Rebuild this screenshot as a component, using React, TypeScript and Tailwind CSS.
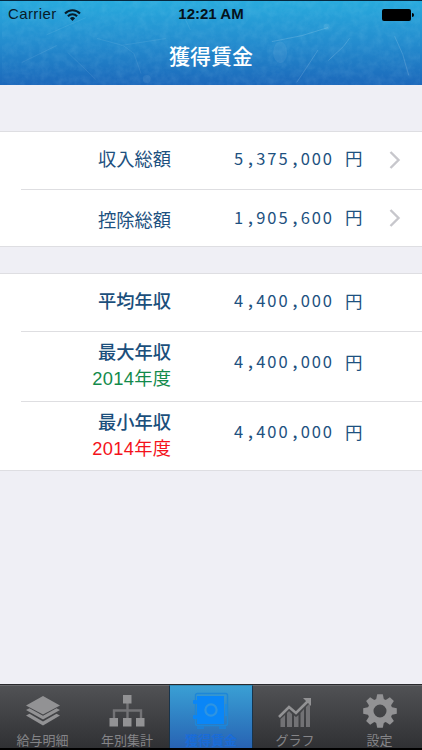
import React, { useState } from 'react';

type TabId = 'slip' | 'yearly' | 'wages' | 'graph' | 'settings';

interface Row {
  id: string;
  label: string;
  amount: string;
  year?: string;
  yearColor?: string;
  link?: boolean;
  bold?: boolean;
  height: string;
  amountShift: string;
  unitShift: string;
  labelShift: string;
}

const TOTALS: Row[] = [
  {
    id: 'income',
    label: '収入総額',
    amount: '5,375,000',
    link: true,
    height: 'h-[57px]',
    amountShift: 'pb-[2px]',
    unitShift: 'pt-0',
    labelShift: 'pb-[1px]',
  },
  {
    id: 'deduction',
    label: '控除総額',
    amount: '1,905,600',
    link: true,
    height: 'h-[56px]',
    amountShift: 'pt-0',
    unitShift: 'pt-0',
    labelShift: 'pt-[5px]',
  },
];

const YEARLY: Row[] = [
  {
    id: 'average',
    label: '平均年収',
    amount: '4,400,000',
    bold: true,
    height: 'h-[57px]',
    amountShift: 'pb-[2px]',
    unitShift: 'pt-[2px]',
    labelShift: 'pb-[1px]',
  },
  {
    id: 'max',
    label: '最大年収',
    amount: '4,400,000',
    year: '2014年度',
    yearColor: 'text-[#138a4b]',
    bold: true,
    height: 'h-[69px]',
    amountShift: 'pb-[8px]',
    unitShift: 'pt-[2px]',
    labelShift: 'pb-[1px]',
  },
  {
    id: 'min',
    label: '最小年収',
    amount: '4,400,000',
    year: '2014年度',
    yearColor: 'text-[#f4121b]',
    bold: true,
    height: 'h-[68px]',
    amountShift: 'pb-[7px]',
    unitShift: 'pt-[2px]',
    labelShift: 'pb-[1px]',
  },
];

const SANS = "font-['Liberation_Sans','Noto_Sans_CJK_JP',sans-serif]";

function Header() {
  return (
    <header className="relative h-[85px] shrink-0 overflow-hidden border-t border-[#06283f] bg-linear-to-b from-[#28aadd] via-[#248cce] to-[#1c68ba]">
      {/* Scratched texture */}
      <svg className="absolute inset-0 h-full w-full" viewBox="0 0 422 85" fill="none" stroke="#fff" strokeLinecap="round">
        <filter id="speckle" x="0" y="0" width="100%" height="100%">
          <feTurbulence type="fractalNoise" baseFrequency="0.13" numOctaves="4" seed="8" />
          <feColorMatrix values="0 0 0 0 0.6  0 0 0 0 0.9  0 0 0 0 1  0.9 0 0 0 -0.3" />
        </filter>
        <rect width="422" height="85" filter="url(#speckle)" stroke="none" opacity="0.18" />
        <g opacity="0.15" strokeWidth="1">
          <path d="M273 41L303 35L329 27" />
          <path d="M319 50L308 67L298 82" />
          <path d="M330 60L345 46L351 38" />
          <path d="M397 36L405 54L411 75" />
        </g>
        <g opacity="0.08" strokeWidth="1">
          <path d="M96 38L122 45L133 53L140 73" />
          <path d="M45 34L84 17M20 62L55 45M66 52L94 79" />
          <path d="M120 45L165 38M182 12L190 29" />
        </g>
        <g fill="#fff" stroke="none" opacity="0.07">
          <ellipse cx="281" cy="52" rx="7" ry="11" />
          <circle cx="146" cy="79" r="4" />
          <circle cx="328" cy="26" r="3" />
        </g>
      </svg>

      <div className="relative grid h-[27px] grid-cols-3 items-center px-2 text-[15px] text-[#081b28]">
        <div className="flex items-center gap-[7px]">
          <span className="tracking-[0.4px]">Carrier</span>
          <svg width="17" height="12" viewBox="0 0 17 12" fill="none" stroke="currentColor" strokeWidth="2">
            <path d="M1 4.5C5.2 0 11.8 0 16 4.5" />
            <path d="M3.9 7.3C6.6 4.4 10.4 4.4 13.1 7.3" />
            <path d="M5.9 9.2C7.4 7.6 9.6 7.6 11.1 9.2L8.5 12Z" fill="currentColor" stroke="none" />
          </svg>
        </div>
        <span className="text-center font-bold whitespace-nowrap text-[#05121b]">12:21 AM</span>
        <div className="flex items-center justify-end">
          <span className="h-3 w-[29px] rounded-[2px] bg-black" />
          <span className="ml-[1px] h-1 w-[2px] rounded-r-full bg-black" />
        </div>
      </div>
      <h1 className="relative mt-[13px] text-center text-[21px] leading-[31px] font-medium text-white">獲得賃金</h1>
    </header>
  );
}

// Commas take the same width as a digit so that the columns line up
function Amount({ value }: { value: string }) {
  return (
    <span className="w-[111px] shrink-0 pb-[2px] font-['Noto_Sans_CJK_JP',sans-serif] text-[16.5px] tracking-[1.95px] whitespace-nowrap">
      {value.split(',').map((part, i) => (
        <React.Fragment key={i}>
          {i > 0 && <span className="inline-block w-[11.1px] pl-[3px] font-medium">,</span>}
          {part}
        </React.Fragment>
      ))}
    </span>
  );
}

function ListRow({ row, last }: { row: Row; last: boolean }) {
  return (
    <li className={`ml-[21px] flex items-stretch text-[#1d5180] ${row.height} ${last ? '' : 'box-content border-b border-[#dedee1]'}`}>
      <div className={`flex w-[150px] flex-col items-end justify-center text-[18.3px] leading-[26px] ${row.labelShift}`}>
        <span className={row.bold ? 'font-medium text-[#1b4f7c]' : ''}>{row.label}</span>
        {row.year && <span className={`mr-[-0.3px] tracking-[0.3px] ${row.yearColor}`}>{row.year}</span>}
      </div>
      <div className={`ml-[63px] flex w-[128px] items-center ${row.amountShift}`}>
        <Amount value={row.amount} />
        <span className={`text-[17.5px] ${row.unitShift}`}>円</span>
      </div>
      {row.link && (
        <div className="ml-[27px] flex items-center pb-[1px]">
          <svg width="12" height="18" viewBox="0 0 12 18" fill="none" stroke="#c7c7cc" strokeWidth="2.4">
            <path d="M1.5 1L9.5 9L1.5 17" />
          </svg>
        </div>
      )}
    </li>
  );
}

function Section({ rows }: { rows: Row[] }) {
  return (
    <ul className="border-y border-[#dedee2] bg-white">
      {rows.map((row, i) => (
        <ListRow key={row.id} row={row} last={i === rows.length - 1} />
      ))}
    </ul>
  );
}

function SlipIcon() {
  return (
    <svg width="36" height="32" viewBox="0 0 36 32" fill="#929294">
      <path d="M18 1L35 10.5L18 19.5L1 10.5Z" />
      <path d="M1 15L4.5 13.2L18 20.8L31.5 13.2L35 15L18 24.6Z" />
      <path d="M1 20.6L4.5 18.8L18 26.4L31.5 18.8L35 20.6L18 30.6Z" />
    </svg>
  );
}

function YearlyIcon() {
  return (
    <svg width="36" height="34" viewBox="0 0 36 34" fill="#929294">
      <path d="M5 24V16.5H32V24M18.5 9V24" fill="none" stroke="#737376" strokeWidth="2.4" />
      <path d="M14 1h8.5v8.5H14zM.5 24H9v8.5H.5zM14 24h8.5v8.5H14zM27 24h8.5v8.5H27z" />
    </svg>
  );
}

function SafeIcon() {
  return (
    <svg width="36" height="38" viewBox="0 0 36 38" fill="#0a86f7">
      <rect x="2.5" y="1.5" width="32" height="32" rx="2" fill="none" stroke="#1d87d8" strokeWidth="1.4" />
      <path d="M4 34h7v3H4zM26 34h7v3h-7z" fill="#1d80d6" />
      <rect x="4" y="4" width="27" height="28" />
      <rect x="0" y="8" width="4" height="4" rx="1" />
      <rect x="0" y="23" width="4" height="4" rx="1" />
      <circle cx="18" cy="18" r="5.6" fill="none" stroke="#2e94e2" strokeWidth="2.2" />
      <path d="M33 12v12" stroke="#198be8" strokeWidth="1.5" />
    </svg>
  );
}

function GraphIcon() {
  return (
    <svg className="mt-[3px]" width="34" height="31" viewBox="0 0 34 31">
      <path d="M2.5 22L7 18V30H2.5ZM9 16L11 14L14 17V30H9ZM16 18.5L18 20L20.5 18V30H16ZM22.5 16L26 12V30H22.5ZM28 10L32 6V30H28Z" fill="#727275" />
      <path d="M1 20L11 10L18 16L30 4" fill="none" stroke="#929294" strokeWidth="2.6" />
      <path d="M25 1H33V9Z" fill="#929294" />
    </svg>
  );
}

function SettingsIcon() {
  return (
    <svg width="34" height="34" viewBox="-17 -17 34 34">
      <circle r="9.5" fill="none" stroke="#929294" strokeWidth="6" />
      <g fill="#929294">
        {[0, 45, 90, 135, 180, 225, 270, 315].map((deg) => (
          <path key={deg} d="M-4 -11L-2.8 -16.8H2.8L4 -11Z" transform={`rotate(${deg})`} />
        ))}
      </g>
    </svg>
  );
}

const TABS: { id: TabId; label: string; width: string; icon: React.ReactNode }[] = [
  { id: 'slip', label: '給与明細', width: 'w-[85px]', icon: <SlipIcon /> },
  { id: 'yearly', label: '年別集計', width: 'w-[84px]', icon: <YearlyIcon /> },
  { id: 'wages', label: '獲得賃金', width: 'w-[84px]', icon: <SafeIcon /> },
  { id: 'graph', label: 'グラフ', width: 'w-[84px]', icon: <GraphIcon /> },
  { id: 'settings', label: '設定', width: 'w-[85px]', icon: <SettingsIcon /> },
];

function TabBar({ active, onChange }: { active: TabId; onChange: (id: TabId) => void }) {
  return (
    <nav className="flex h-[66px] border-t border-b-2 border-t-[#29292c] border-b-black bg-linear-to-b from-[#515255] to-[#303134]">
      {TABS.map((tab) => {
        const selected = tab.id === active;
        return (
          <button
            key={tab.id}
            onClick={() => onChange(tab.id)}
            className={`flex flex-col items-center border-t ${tab.width} ${
              selected
                ? 'border-x border-t-[#328bb8] border-x-[#18344c] bg-linear-to-b from-[#3a9fd4] to-[#2863b3]'
                : 'border-t-[#68696c]'
            }`}
          >
            <span className="flex h-[47px] items-center justify-center pt-[2px]">{tab.icon}</span>
            <span
              className={`text-[13px] leading-[15px] ${selected ? 'font-bold text-[#1a6cd8]' : 'text-[#858588]'}`}
            >
              {tab.label}
            </span>
          </button>
        );
      })}
    </nav>
  );
}

export default function App() {
  const [tab, setTab] = useState<TabId>('wages');

  return (
    <div className={`flex h-[750px] w-[422px] flex-col overflow-hidden bg-[#efeff5] ${SANS}`} lang="ja">
      <Header />
      <main className="flex flex-1 flex-col gap-[26px] pt-[46px]">
        <Section rows={TOTALS} />
        <Section rows={YEARLY} />
      </main>
      <TabBar active={tab} onChange={setTab} />
    </div>
  );
}
